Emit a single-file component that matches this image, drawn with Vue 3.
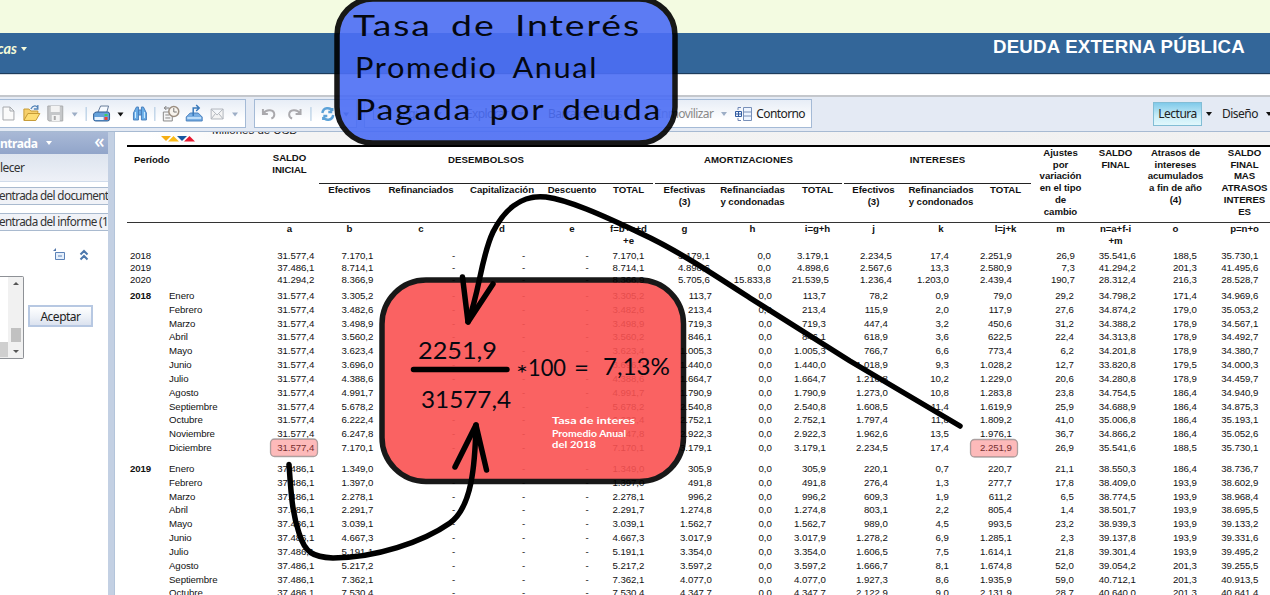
<script setup>
const top3 = [
  ['2018', '', '31.577,4', '7.170,1', '-', '-', '-', '7.170,1', '3.179,1', '0,0', '3.179,1', '2.234,5', '17,4', '2.251,9', '26,9', '35.541,6', '188,5', '35.730,1'],
  ['2019', '', '37.486,1', '8.714,1', '-', '-', '-', '8.714,1', '4.898,6', '0,0', '4.898,6', '2.567,6', '13,3', '2.580,9', '7,3', '41.294,2', '201,3', '41.495,6'],
  ['2020', '', '41.294,2', '8.366,9', '-', '-', '-', '8.366,9', '5.705,6', '15.833,8', '21.539,5', '1.236,4', '1.203,0', '2.439,4', '190,7', '28.312,4', '216,3', '28.528,7']
]
const m = (month, a, b, g, j, k, l, mm, n, o, p, year = '') => [year, month, a, b, '-', '-', '-', b, g, '0,0', g, j, k, l, mm, n, o, p]
const A = '31.577,4'
const B = '37.486,1'
const y2018 = [
  m('Enero', A, '3.305,2', '113,7', '78,2', '0,9', '79,0', '29,2', '34.798,2', '171,4', '34.969,6', '2018'),
  m('Febrero', A, '3.482,6', '213,4', '115,9', '2,0', '117,9', '27,6', '34.874,2', '179,0', '35.053,2'),
  m('Marzo', A, '3.498,9', '719,3', '447,4', '3,2', '450,6', '31,2', '34.388,2', '178,9', '34.567,1'),
  m('Abril', A, '3.560,2', '846,1', '618,9', '3,6', '622,5', '22,4', '34.313,8', '178,9', '34.492,7'),
  m('Mayo', A, '3.623,4', '1.005,3', '766,7', '6,6', '773,4', '6,2', '34.201,8', '178,9', '34.380,7'),
  m('Junio', A, '3.696,0', '1.440,0', '1.018,9', '9,3', '1.028,2', '12,7', '33.820,8', '179,5', '34.000,3'),
  m('Julio', A, '4.388,6', '1.664,7', '1.218,8', '10,2', '1.229,0', '20,6', '34.280,8', '178,9', '34.459,7'),
  m('Agosto', A, '4.991,7', '1.790,9', '1.273,0', '10,8', '1.283,8', '23,8', '34.754,5', '186,4', '34.940,9'),
  m('Septiembre', A, '5.678,2', '2.540,8', '1.608,5', '11,4', '1.619,9', '25,9', '34.688,9', '186,4', '34.875,3'),
  m('Octubre', A, '6.222,4', '2.752,1', '1.797,4', '11,8', '1.809,2', '41,0', '35.006,8', '186,4', '35.193,1'),
  m('Noviembre', A, '6.247,8', '2.922,3', '1.962,6', '13,5', '1.976,1', '36,7', '34.866,2', '186,4', '35.052,6'),
  m('Diciembre', A, '7.170,1', '3.179,1', '2.234,5', '17,4', '2.251,9', '26,9', '35.541,6', '188,5', '35.730,1')
]
const y2019 = [
  m('Enero', B, '1.349,0', '305,9', '220,1', '0,7', '220,7', '21,1', '38.550,3', '186,4', '38.736,7', '2019'),
  m('Febrero', B, '1.397,0', '491,8', '276,4', '1,3', '277,7', '17,8', '38.409,0', '193,9', '38.602,9'),
  m('Marzo', B, '2.278,1', '996,2', '609,3', '1,9', '611,2', '6,5', '38.774,5', '193,9', '38.968,4'),
  m('Abril', B, '2.291,7', '1.274,8', '803,1', '2,2', '805,4', '1,4', '38.501,7', '193,9', '38.695,5'),
  m('Mayo', B, '3.039,1', '1.562,7', '989,0', '4,5', '993,5', '23,2', '38.939,3', '193,9', '39.133,2'),
  m('Junio', B, '4.667,3', '3.017,9', '1.278,2', '6,9', '1.285,1', '2,3', '39.137,8', '193,9', '39.331,6'),
  m('Julio', B, '5.191,1', '3.354,0', '1.606,5', '7,5', '1.614,1', '21,8', '39.301,4', '193,9', '39.495,2'),
  m('Agosto', B, '5.217,2', '3.597,2', '1.666,7', '8,1', '1.674,8', '52,0', '39.054,2', '201,3', '39.255,5'),
  m('Septiembre', B, '7.362,1', '4.077,0', '1.927,3', '8,6', '1.935,9', '59,0', '40.712,1', '201,3', '40.913,5'),
  m('Octubre', B, '7.530,4', '4.347,7', '2.122,9', '9,0', '2.131,9', '28,7', '40.640,0', '201,3', '40.841,4')
]
const blocks = [
  { kind: 'annual', rows: top3 },
  { kind: 'first', rows: y2018 },
  { kind: 'second', rows: y2019 }
]
const subs = [
  ['b', 'Efectivos'], ['c', 'Refinanciados'], ['d', 'Capitalización'], ['e', 'Descuento'], ['f', 'TOTAL'],
  ['g', 'Efectivas\n(3)'], ['h', 'Refinanciadas\ny condonadas'], ['i', 'TOTAL'],
  ['j', 'Efectivos\n(3)'], ['k', 'Refinanciados\ny condonados'], ['l', 'TOTAL']
]
const talls = [
  ['m', 'Ajustes\npor\nvariación\nen el tipo\nde\ncambio'], ['n', 'SALDO\nFINAL'],
  ['o', 'Atrasos de\nintereses\nacumulados\na fin de año\n(4)'], ['p', 'SALDO\nFINAL\nMAS\nATRASOS\nINTERES\nES']
]
const formulas = [
  ['a', 'a'], ['b', 'b'], ['c', 'c'], ['d', 'd'], ['e', 'e'], ['f', 'f=b+c+d\n+e'], ['g', 'g'], ['h', 'h'], ['i', 'i=g+h'],
  ['j', 'j'], ['k', 'k'], ['l', 'l=j+k'], ['m', 'm'], ['n', 'n=a+f-i\n+m'], ['o', 'o'], ['p', 'p=n+o']
]
</script>

<template>
  <div class="page">
    <div class="strip"></div>
    <header class="banner">
      <div class="menu">cas<i class="tri light"></i></div>
      <h1>DEUDA EXTERNA PÚBLICA</h1>
    </header>
    <div class="gap"></div>

    <nav class="toolbar">
      <div class="group g1">
        <svg width="246" height="27" viewBox="0 0 246 27">
          <path d="M3 7h7l4 4v9H3zM10 7v4h4" fill="#fafafa" stroke="#a5a8ac" />
          <path d="M24 20V9h5l2 2h7v3" fill="#f6cf6b" stroke="#c69a35" />
          <path d="M24 20.500l4-7h12l-4 7z" fill="#fddd74" stroke="#c69a35" />
          <path d="M31 9c2-4 6-4 7-1M38 5v4h-4" fill="none" stroke="#5484b8" stroke-width="1.300" />
          <path d="M48 6h15v15H49l-1-1z" fill="#c5c7c9" stroke="#a8aaac" />
          <path d="M51 6h9v6h-9zM52 15h8v6h-8z" fill="#f3f3f3" /><path d="M54 16h2v4h-2z" fill="#aaa" />
          <path d="M72 12.500h6l-3 4z" fill="#9daec6" />
          <path d="M86.500 7v14M155.500 7v14" stroke="#a7c4df" />
          <path d="M98 13l3-7h8l-2 7" fill="#f6faff" stroke="#667b99" />
          <path d="M94 14q1-2 3-2h11q2 0 2 2v5q0 2-2 2H96q-2 0-2-2z" fill="#65a2db" stroke="#2e5c93" />
          <path d="M95 17h9v3h-9z" fill="#e7f3ff" /><path d="M105 14h3v2h-3z" fill="#3fd05c" /><path d="M105 17h3v3h-3z" fill="#ef4031" />
          <path d="M118 12.500h6l-3 4z" fill="#111" />
          <path d="M134 20v-7l3-6h2v13zM147 20v-7l-3-6h-2v13zM139 10h3v5h-3z" fill="#69aee8" stroke="#4a80bd" />
          <path d="M136 12v6M145 12v6" stroke="#d8efff" />
          <path d="M164 12h9v9h-9zM166 15h4M166 18h5" fill="#f5f5f5" stroke="#8a8a8a" />
          <circle cx="174.500" cy="11.500" r="5" fill="#f8f4ee" stroke="#9b8e81" stroke-width="1.500" />
          <path d="M174.500 8v4h3M170 8h-5l2-2m-2 2 2 2" fill="none" stroke="#777" />
          <path d="M187 17l4-4h8l4 4v4h-16z" fill="#79afe4" stroke="#4a80bd" />
          <path d="M188 18h14" stroke="#d6edff" stroke-width="1.500" />
          <path d="M194 16V8h5m-2-3 3 3-3 3" fill="none" stroke="#3979bb" stroke-width="1.500" />
          <path d="M212 9h12v10h-12zM212 9l6 6 6-6M212 19l4-5M224 19l-4-5" fill="#f4f4f4" stroke="#b1b6bd" />
          <path d="M233 12.500h6l-3 4z" fill="#9daec6" />
        </svg>
      </div>
      <div class="group g2">
        <svg width="102" height="27" viewBox="0 0 102 27">
          <path d="M8 9v5h5M8.500 13.500c3-5 11-4 11 1q0 3-3 4" fill="none" stroke="#aaa9ad" stroke-width="2" />
          <path d="M46 9v5h-5M45.500 13.500c-3-5-11-4-11 1q0 3 3 4" fill="none" stroke="#aaa9ad" stroke-width="2" />
          <path d="M56.500 7v14" stroke="#a7c4df" />
          <path d="M68 13c1-6 8-6 10-2v-3m0 4h-4M79 15c-1 6-8 6-10 2v3m0-4h4" fill="none" stroke="#5ca2d8" stroke-width="2.500" />
          <path d="M89 12.500h6l-3 4z" fill="#597493" />
        </svg>
      </div>
      <div class="group g3">
        <span class="box"></span><span class="lab w1">Seguir</span><i class="tri"></i>
        <span class="lab w2">Explorar</span><i class="tri"></i>
        <span class="lab w3">Barra de filtros</span>
        <span class="lab off">Inmovilizar</span><i class="tri pale"></i>
        <svg class="outline" width="18" height="16" viewBox="0 0 18 16">
          <path d="M3 4V1.500h3M3 12v2.500h3" fill="none" stroke="#7087b5" />
          <path d="M.5 5.500h6v5h-6zM3.500 6v4M1 8h5" fill="#edf3ff" stroke="#315ba0" />
          <path d="M8.500 1.500h8v13h-8zM8.500 6h8M8.500 10h8" fill="#edf4ff" stroke="#7890b9" />
        </svg>
        <span class="lab on">Contorno</span>
      </div>
      <div class="modes"><span class="read">Lectura</span><i class="tri dark"></i><span class="design">Diseño</span><i class="tri dark"></i></div>
    </nav>

    <main class="body">
      <aside class="side">
        <div class="side-head"><span>ntrada</span><i class="tri light"></i><b>«</b></div>
        <div class="side-sub">lecer</div>
        <div class="entry">entrada del document</div>
        <div class="entry second-entry">entrada del informe (1</div>
        <div class="side-icons">
          <svg width="40" height="14" viewBox="0 0 40 14">
            <path d="M2.500 4.500h9v7h-9zM5 8h4" fill="#e5effb" stroke="#5c82b7" /><path d="M0 3h3V0z" fill="#5377aa" />
            <path d="M27.500 6.500l3.500-3.500 3.500 3.500M27.500 11.500l3.500-3.500 3.500 3.500" fill="none" stroke="#4d78ad" stroke-width="2" />
          </svg>
        </div>
        <div class="chooser">
          <div class="list"><div class="rail"><i class="up"></i><span></span><i class="down"></i></div></div>
          <button>Aceptar</button>
        </div>
      </aside>
      <section class="report">
        <div class="report-top">
          <svg width="35" height="6" viewBox="0 0 35 6"><path d="M0 0h10L5 5z" fill="#f6ae13" /><path d="M7 5.500h11L12.500 0z" fill="#fabb18" /><path d="M16 0h10l-5 5z" fill="#1756a0" /><path d="M23 5.500h11L28.500 0z" fill="#e71930" /></svg>
          <div class="units"><span>Millones de USD</span></div>
        </div>
        <div class="head">
          <div class="per">Período</div>
          <div class="ini">SALDO<br>INICIAL</div>
          <div class="grp desem"><span>DESEMBOLSOS</span></div>
          <div class="grp amort"><span>AMORTIZACIONES</span></div>
          <div class="grp inter"><span>INTERESES</span></div>
          <div v-for="s in subs" :key="s[0]" class="sub" :class="'c-' + s[0]">{{ s[1] }}</div>
          <div v-for="t in talls" :key="t[0]" class="tall" :class="'c-' + t[0]">{{ t[1] }}</div>
        </div>
        <div class="formula">
          <div v-for="f in formulas" :key="f[0]" :class="'c-' + f[0]">{{ f[1] }}</div>
        </div>
        <div v-for="b in blocks" :key="b.kind" class="block" :class="b.kind">
          <div v-for="(r, ri) in b.rows" :key="ri" class="row">
            <span v-for="(v, i) in r" :key="i" :class="{ yr: i === 0, mon: i === 1 }">{{ v }}</span>
          </div>
        </div>
      </section>
    </main>

    <svg class="notes" width="1270" height="595" viewBox="0 0 1270 595">
      <g stroke="#000" stroke-width="5.500" opacity=".9">
        <rect x="337" y="-1" width="338" height="144" rx="36" fill="#4c6ef5" />
        <rect x="382" y="280" width="301.500" height="201.500" rx="44" fill="#fa5252" />
      </g>
      <g fill="#fa5252" fill-opacity=".4" stroke="#777" stroke-opacity=".6" stroke-width="1.300">
        <rect x="270.500" y="439" width="47" height="17.500" rx="4" /><rect x="970.500" y="439.500" width="47" height="17.500" rx="4" />
      </g>
      <g fill="none" stroke="#000" stroke-width="5.500" stroke-linecap="round" stroke-linejoin="round">
        <path d="M960 426L850 361L750 298C710 272 675 249 640 233C600 214 568 200 546 197C520 194 503 212 493 232C481 257 480 290 468 322" />
        <path d="M462.500 277l5.500 45 25-38" />
        <path d="M289 464.500C291 493 292 512 299 533C305 553 313 557 333 558C375 558 423 542 450 523C472 507 475 465 476 425" />
        <path d="M455 467l21-42 10.500 45M413.500 369.500H507" />
      </g>
      <g class="hand">
        <g font-size="29" letter-spacing="1.500" word-spacing="6">
          <text x="353" y="36" textLength="288" lengthAdjust="spacingAndGlyphs">Tasa de Interés</text>
          <text x="355" y="77.500" textLength="243" lengthAdjust="spacingAndGlyphs">Promedio Anual</text>
          <text x="355" y="120" textLength="307" lengthAdjust="spacingAndGlyphs">Pagada por deuda</text>
        </g>
        <g font-size="23">
          <text x="418" y="359" textLength="79" lengthAdjust="spacingAndGlyphs">2251,9</text>
          <text x="421" y="408" textLength="90" lengthAdjust="spacingAndGlyphs">31577,4</text>
          <text x="516" y="382" textLength="12" lengthAdjust="spacingAndGlyphs">*</text>
          <text x="528" y="375.500" textLength="38" lengthAdjust="spacingAndGlyphs">100</text>
          <text x="574" y="375.500" textLength="15" lengthAdjust="spacingAndGlyphs">=</text>
          <text x="603" y="374.500" textLength="67" lengthAdjust="spacingAndGlyphs">7,13%</text>
        </g>
        <g class="white" font-size="9.500">
          <text x="552" y="423.500" textLength="83" lengthAdjust="spacingAndGlyphs">Tasa de interes</text>
          <text x="552" y="436.500" textLength="74" lengthAdjust="spacingAndGlyphs">Promedio Anual</text>
          <text x="552" y="448" textLength="44" lengthAdjust="spacingAndGlyphs">del 2018</text>
        </g>
      </g>
    </svg>
  </div>
</template>

<style>
body { overflow: hidden; background: #fff; }
</style>

<style scoped>
* { box-sizing: border-box; }
.page { position: relative; width: 1270px; height: 595px; overflow: hidden; display: flex; flex-direction: column; background: #fff; font-family: "Noto Sans", sans-serif; font-size: 12px; color: #222; }
.strip { height: 33px; background: #f3fbe1; flex: none; }
.banner { height: 41px; flex: none; background: #336699; border-bottom: 1px solid #1d3c5c; display: flex; justify-content: space-between; padding-right: 25px; color: #fff; }
.menu { color: #f3fbd8; font: italic bold 14.500px/30px Lato, sans-serif; display: flex; align-items: center; height: 31px; gap: 4px; margin-left: -3px; }
h1 { margin: 0; font: bold 18.670px/27px "Liberation Sans", sans-serif; letter-spacing: .22px; }
.tri { width: 0; height: 0; border: 3px solid transparent; border-top: 4px solid #526b8d; border-bottom: 0; flex: none; }
.tri.light { border-top-color: #f5fbdc; }
.tri.dark { border-top-color: #111; }
.tri.pale { border-top-color: #9daec6; }
.gap { height: 21px; flex: none; border-top: 1px solid #d8dde3; }
.toolbar { height: 37px; flex: none; background: #e4eaf4; border-top: 2px solid #c4c7cc; border-bottom: 1px solid #a7bad2; display: flex; align-items: flex-start; padding-top: 2px; }
.group { height: 29px; border: 1px solid #a4bad6; background: linear-gradient(#e7edf6, #fff 75%); display: flex; align-items: center; overflow: hidden; flex: none; }
.g1 { width: 246px; border-left: 0; }
.g2 { width: 103px; margin-left: 8px; }
.g3 { width: 448px; margin-left: 7px; padding-left: 8px; }
.lab { white-space: nowrap; letter-spacing: -.6px; }
.box { width: 14px; height: 12px; border: 1px solid #6883b2; margin-right: 9px; }
.w1 { width: 40px; } .w2 { width: 52px; margin-left: 24px; } .w3 { width: 86px; margin-left: 24px; } .off { color: #888; margin: 0 8px 0 auto; }
.outline { margin: 0 3px 0 8px; } .on { margin-right: 6px; }
.modes { margin-left: auto; display: flex; align-items: center; height: 29px; }
.read { width: 49px; height: 24px; line-height: 22px; text-align: center; border: 1px solid #82bdd5; background: linear-gradient(#80caea, #c9edf8 60%, #e1f8fc); letter-spacing: -.5px; }
.modes .tri { margin-left: 4px; } .design { margin-left: 10px; width: 35px; letter-spacing: -.5px; } .modes .design + .tri { margin-left: 9px; margin-right: -2px; }
.body { height: 463px; display: flex; flex: none; }
.side { width: 114px; flex: none; border-right: 6px solid #c3d0e3; background: #fff; color: #333; font-size: 12px; overflow: hidden; }
.side-head { height: 22px; background: linear-gradient(#a9b9d6, #91a5ca); color: #fff; font-weight: bold; display: flex; align-items: center; letter-spacing: -.45px; }
.side-head .tri { margin-left: 9px; border-top-color: #fff; } .side-head b { margin: -4px 4px 0 auto; font-size: 19px; font-weight: 500; }
.side-sub { height: 28px; line-height: 28px; background: linear-gradient(#dde4ef, #eef1f7); border-bottom: 1px solid #d0dbea; letter-spacing: -.6px; }
.entry { height: 18px; margin-top: 5px; border: 1px solid #a9bacf; border-width: 1px 0; background: #f0f2f7; line-height: 15px; white-space: nowrap; overflow: hidden; text-indent: -1px; font-size: 11.700px; letter-spacing: -.62px; }
.second-entry { margin-top: 8px; }
.side-icons { margin: 17px 0 0 53px; height: 14px; display: flex; }
.chooser { margin-top: 14px; display: flex; }
.list { width: 24px; height: 83px; border: 1px solid #8e9196; border-left: 0; border-radius: 0 2px 2px 0; display: flex; justify-content: flex-end; background: linear-gradient(#fff 65px, #cfcfcf 65px 80px, #eee 80px); }
.rail { width: 15px; background: #f1f1f1; display: flex; flex-direction: column; align-items: center; padding: 5px 0; }
.rail span { width: 10px; height: 14px; background: #c1c1c1; margin-top: auto; margin-bottom: 8px; }
.rail i { width: 0; border: 3px solid transparent; } .up { border-top: 0 !important; border-bottom-color: #555 !important; } .down { border-bottom: 0 !important; border-top-color: #555 !important; }
button { margin: 29px 0 0 4px; width: 65px; height: 22px; padding: 0; border: 2px solid #b7c8e2; background: linear-gradient(#fff, #edf1f7 55%, #dbe2ef); font: 12px/17px "Noto Sans", sans-serif; color: #222; letter-spacing: -.5px; }
.report { width: 1156px; flex: none; border-left: 1px solid #b3c4da; padding-left: 12px; font-family: "Liberation Sans", sans-serif; overflow: hidden; }
.report-top { height: 13px; background: linear-gradient(90deg, #fff 20px, #f4f4f4 170px, #f1f1f1); display: flex; padding-left: 34px; }
.report-top svg { margin-top: 4px; flex: none; }
.units { height: 4px; overflow: hidden; margin-left: 16px; font-size: 11.500px; } .units span { display: block; margin-top: -8px; line-height: 13px; white-space: nowrap; }
.head, .formula { display: grid; width: 1150px; grid-template-columns: [per] 133px [a] 59px [b] 61px [c] 82px [d] 80px [e] 60px [f] 53px [g] 59px [h] 77px [i] 53px [j] 59px [k] 76px [l] 53px [m] 57px [n] 53px [o] 67px [p] 71px; font-size: 9.670px; font-weight: bold; text-align: center; white-space: pre; line-height: 11.900px; letter-spacing: -.07px; color: #111; }
.head { height: 78px; border-top: 2px solid #000; border-bottom: 1px solid #333; grid-template-rows: 37px 38px; }
.per { grid-area: 1 / 1 / 3; text-align: left; padding: 7px 0 0 7px; }
.ini { grid-area: 1 / 2 / 3; padding-top: 5px; white-space: normal; }
.grp { grid-row: 1; border-bottom: 1px solid #222; padding-top: 7px; letter-spacing: .08px; }
.desem { grid-column: b / g; margin-right: 2px; }
.amort { grid-column: g / j; margin-right: 2px; }
.inter { grid-column: j / m; margin-right: 1px; }
.sub { grid-row: 2; }
.tall { grid-row: 1 / 3; line-height: 11.700px; }
.c-a { grid-column: a; } .c-b { grid-column: b; } .c-c { grid-column: c; } .c-d { grid-column: d; } .c-e { grid-column: e; } .c-f { grid-column: f; } .c-g { grid-column: g; } .c-h { grid-column: h; } .c-i { grid-column: i; } .c-j { grid-column: j; } .c-k { grid-column: k; } .c-l { grid-column: l; } .c-m { grid-column: m; } .c-n { grid-column: n; } .c-o { grid-column: o; } .c-p { grid-column: p; }
.formula { height: 27px; }
.block { font-size: 9.670px; color: #111; letter-spacing: -.09px; }
.row { display: grid; grid-template-columns: 42px 60px 85.200px 59px 82px 70px 63.500px 55.500px 67.500px 60px 54px 62px 61px 63px 62px 62px 61px 61.500px; text-align: right; height: 13.830px; line-height: 13px; white-space: nowrap; }
.yr, .mon { text-align: left; } .yr { padding-left: 3px; }
.annual .row { height: 12px; line-height: 12px; grid-template-columns: 42px 60px 85.200px 59px 82px 70px 63.500px 55.500px 65.500px 61px 58px 63px 57px 63px 63px 61px 61px 61.500px; }
.first { margin-top: 3px; } .second { margin-top: 7px; }
.first .yr, .second .yr { font-weight: bold; }
.notes { position: absolute; inset: 0; }
.hand { font-family: Lato, sans-serif; fill: #050810; }
.white { fill: #fff; font-weight: bold; }
</style>
